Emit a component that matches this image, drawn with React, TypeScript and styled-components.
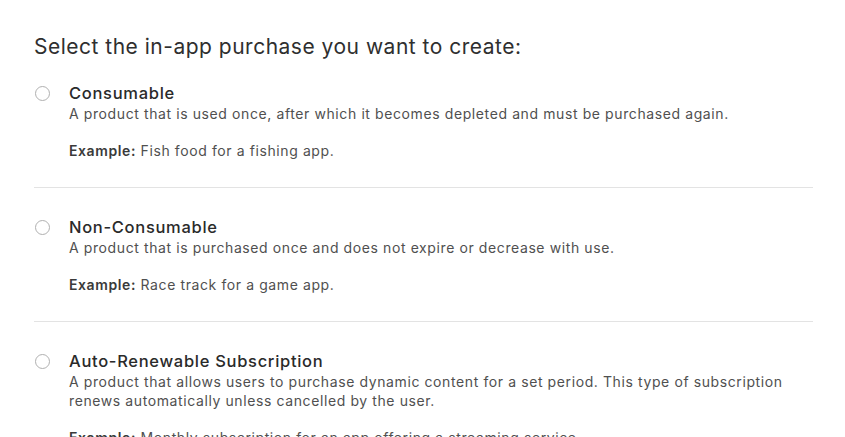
import React from "react";
import styled, { createGlobalStyle } from "styled-components";

const Global = createGlobalStyle`
  html, body { margin: 0; padding: 0; background: #ffffff; }
  body { font-family: "Inter", "Liberation Sans", Arial, sans-serif; -webkit-font-smoothing: antialiased; }
`;

const Page = styled.div`
  width: 845px;
  height: 437px;
  overflow: hidden;
  background: #fff;
  box-sizing: border-box;
  padding: 35px 32px 0 34px;
`;

const Heading = styled.h1`
  margin: 0 0 24px 0;
  font-size: 21px;
  line-height: 24px;
  font-weight: 400;
  color: #2f2f2f;
  letter-spacing: 0.5px;
`;

const List = styled.div`
  display: flex;
  flex-direction: column;
`;

const Option = styled.label<{ $last?: boolean }>`
  display: grid;
  grid-template-columns: 35px 1fr;
  padding-bottom: ${(p) => (p.$last ? "0" : "27px")};
  margin-bottom: ${(p) => (p.$last ? "0" : "29px")};
  border-bottom: ${(p) => (p.$last ? "none" : "1px solid #e3e3e3")};
  cursor: pointer;
`;

const RadioCell = styled.div`
  height: 20px;
  display: flex;
  align-items: center;
`;

const Radio = styled.span`
  display: block;
  width: 15px;
  height: 15px;
  margin-left: 1px;
  border-radius: 50%;
  border: 1px solid #b0b0b0;
  background: #fff;
  box-sizing: border-box;
`;

const Body = styled.div`
  display: flex;
  flex-direction: column;
`;

const Title = styled.div`
  font-size: 16.5px;
  line-height: 20px;
  font-weight: 500;
  color: #2a2a2a;
  letter-spacing: 0.7px;
`;

const Desc = styled.div`
  font-size: 14px;
  line-height: 19px;
  color: #505050;
  margin-top: 1px;
  max-width: 730px;
  letter-spacing: 0.6px;
`;

const Example = styled.div`
  font-size: 14px;
  line-height: 19px;
  color: #505050;
  margin-top: 18px;
  letter-spacing: 0.6px;
  b { font-weight: 600; color: #3a3a3a; }
`;

const options = [
  {
    title: "Consumable",
    desc: "A product that is used once, after which it becomes depleted and must be purchased again.",
    example: "Fish food for a fishing app.",
  },
  {
    title: "Non-Consumable",
    desc: "A product that is purchased once and does not expire or decrease with use.",
    example: "Race track for a game app.",
  },
  {
    title: "Auto-Renewable Subscription",
    desc: "A product that allows users to purchase dynamic content for a set period. This type of subscription renews automatically unless cancelled by the user.",
    example: "Monthly subscription for an app offering a streaming service.",
  },
];

export default function App() {
  return (
    <>
      <Global />
      <Page>
        <Heading>Select the in-app purchase you want to create:</Heading>
        <List>
          {options.map((o, i) => (
            <Option key={o.title} $last={i === options.length - 1}>
              <RadioCell>
                <Radio />
              </RadioCell>
              <Body>
                <Title>{o.title}</Title>
                <Desc>{o.desc}</Desc>
                <Example>
                  <b>Example:</b> {o.example}
                </Example>
              </Body>
            </Option>
          ))}
        </List>
      </Page>
    </>
  );
}
